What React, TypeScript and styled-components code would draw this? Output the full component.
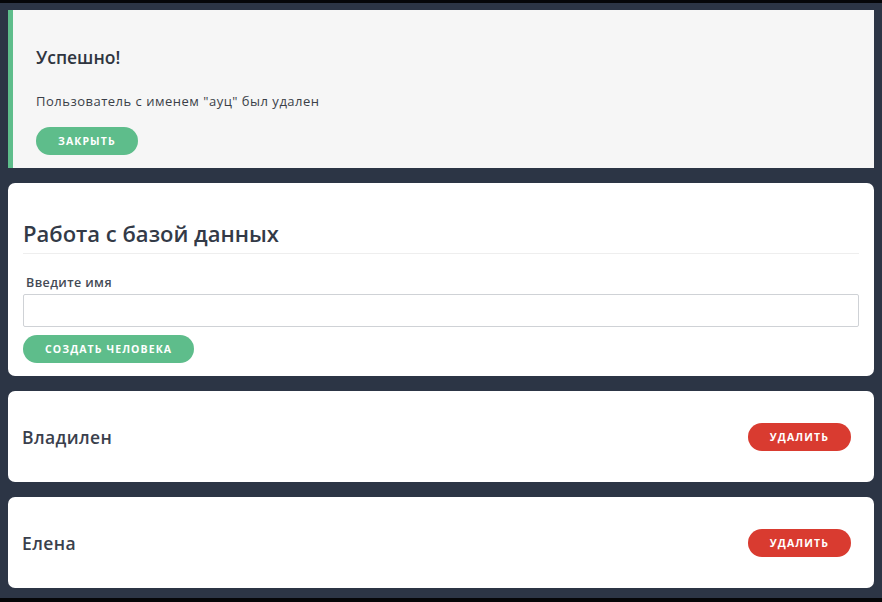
import React from "react";
import styled, { createGlobalStyle } from "styled-components";

const Global = createGlobalStyle`
  html, body { margin: 0; padding: 0; background: #050608; }
  body { font-family: "Open Sans", "Noto Sans", sans-serif; }
  * { box-sizing: border-box; }
`;

const Page = styled.div`
  margin: 3px 0 4px;
  height: 595px;
  background: #2c3545;
  padding: 7px 8px 0 8px;
  display: flex;
  flex-direction: column;
  gap: 15px;
`;

const Alert = styled.div`
  background: #f6f6f6;
  border-left: 5px solid #5ebd8b;
  padding: 35px 20px 13px 23px;
  display: flex;
  flex-direction: column;
  align-items: flex-start;
`;

const AlertTitle = styled.h4`
  margin: 0;
  font-size: 17.5px;
  line-height: 24px;
  font-weight: 600;
  color: #2f3540;
`;

const AlertText = styled.p`
  margin: 24px 0 0;
  font-size: 13px;
  letter-spacing: 0.5px;
  line-height: 16px;
  font-weight: 500;
  color: #3a3f48;
`;

const Pill = styled.button<{ $color: "green" | "red"; $mt?: number }>`
  border: none;
  border-radius: 14px;
  height: 28px;
  padding: 0 22px;
  margin-top: ${(p) => p.$mt ?? 0}px;
  background: ${(p) => (p.$color === "green" ? "#5ebd8b" : "#d93b30")};
  color: #fff;
  font-family: "Open Sans", sans-serif;
  font-weight: 700;
  font-size: 10.5px;
  letter-spacing: 1.1px;
  text-transform: uppercase;
  cursor: pointer;
`;

const Card = styled.div`
  background: #fff;
  border-radius: 7px;
  padding: 36px 15px 13px 15px;
  display: flex;
  flex-direction: column;
  align-items: flex-start;
`;

const CardTitle = styled.h2`
  margin: 0;
  align-self: stretch;
  font-size: 22px;
  line-height: 28px;
  font-weight: 600;
  color: #333a47;
  padding-bottom: 6px;
  border-bottom: 1px solid #eeeeee;
`;

const Label = styled.label`
  margin: 21px 0 0 3px;
  font-size: 12.5px;
  letter-spacing: 0.4px;
  line-height: 16px;
  font-weight: 600;
  color: #444a55;
`;

const Input = styled.input`
  align-self: stretch;
  margin-top: 3px;
  height: 33px;
  border: 1px solid #cfd2d6;
  border-radius: 2px;
  background: #fff;
`;

const Row = styled.div`
  background: #fff;
  border-radius: 7px;
  height: 91px;
  padding: 0 23px 0 14px;
  display: flex;
  align-items: center;
  justify-content: space-between;
`;

const Name = styled.span`
  font-size: 17.5px;
  letter-spacing: 0.4px;
  font-weight: 600;
  color: #3a404c;
`;

const people = ["Владилен", "Елена"];

export default function App() {
  return (
    <>
      <Global />
      <Page>
        <Alert>
          <AlertTitle>Успешно!</AlertTitle>
          <AlertText>Пользователь с именем "ауц" был удален</AlertText>
          <Pill $color="green" $mt={18}>Закрыть</Pill>
        </Alert>
        <Card>
          <CardTitle>Работа с базой данных</CardTitle>
          <Label>Введите имя</Label>
          <Input />
          <Pill $color="green" $mt={8}>Создать человека</Pill>
        </Card>
        {people.map((p) => (
          <Row key={p}>
            <Name>{p}</Name>
            <Pill $color="red">Удалить</Pill>
          </Row>
        ))}
      </Page>
    </>
  );
}
